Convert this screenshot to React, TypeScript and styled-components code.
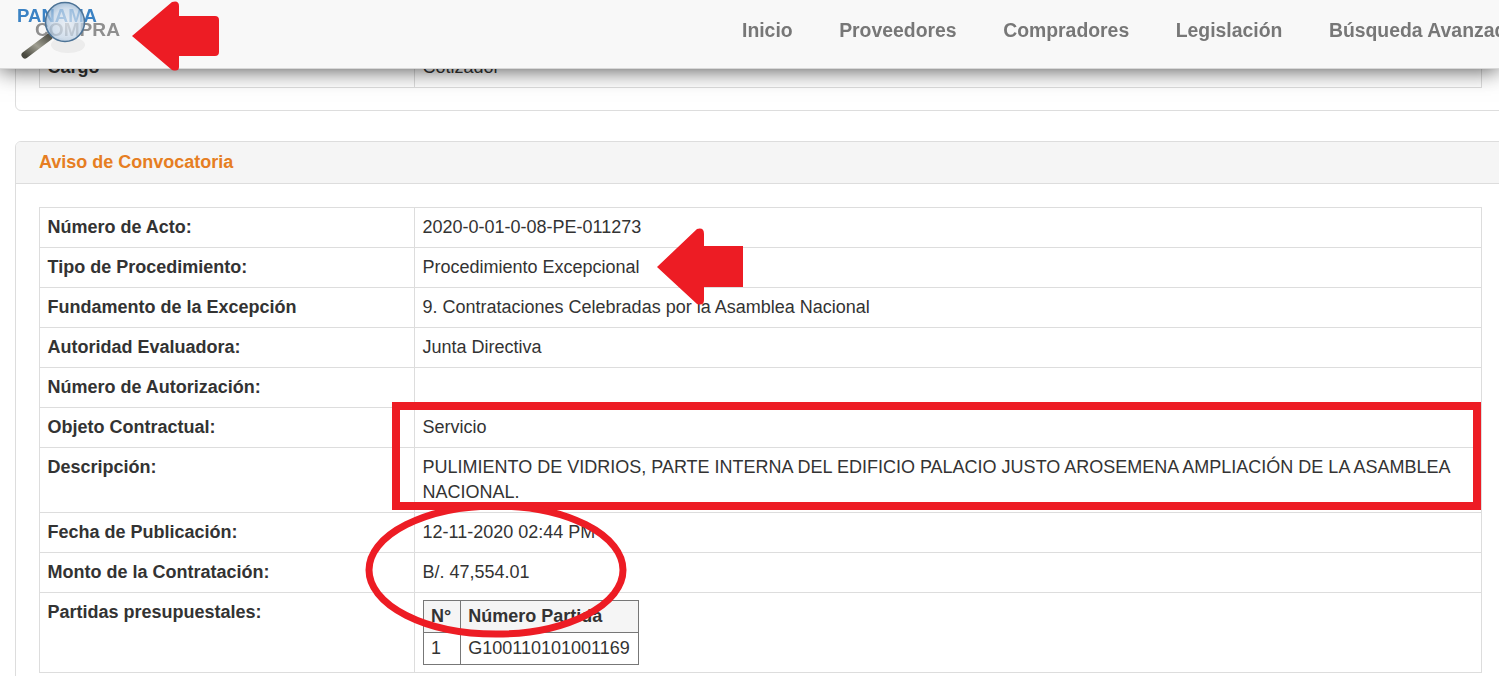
import React from "react";
import styled, { createGlobalStyle } from "styled-components";

const GlobalStyle = createGlobalStyle`
  html, body {
    margin: 0;
    height: 676px;
    overflow: hidden;
    background-color: #ffffff;
    color: #333333;
    font-family: "Liberation Sans", Arial, sans-serif;
    font-size: 18px;
  }
`;

const Navbar = styled.div`
  position: fixed;
  top: 0;
  left: 0;
  right: 0;
  height: 69px;
  z-index: 2;
  display: flex;
  justify-content: space-between;
  background-color: #f8f8f8;
  border-bottom: 1px solid #d8d8d8;
  box-sizing: border-box;
  box-shadow: 0 0 22px rgba(0, 0, 0, 0.75);
  overflow: hidden;
`;

const LogoBox = styled.div`
  padding-left: 14px;
`;

const NavList = styled.nav`
  display: flex;
  flex-shrink: 0;
  gap: 46.5px;
  padding-top: 18px;
  width: 757px;
  white-space: nowrap;
`;

const NavItem = styled.a`
  font-size: 19.4px;
  line-height: 24px;
  font-weight: 700;
  color: #777777;
`;

const Main = styled.div`
  padding: 46px 0 0 15px;
  width: 1540px;
`;

const Panel = styled.div`
  border: 1px solid #dddddd;
  border-radius: 6px;
  margin-bottom: 30px;
  background-color: #ffffff;
`;

const PanelHeading = styled.div`
  height: 42px;
  padding: 9px 23px 0;
  box-sizing: border-box;
  background-color: #f5f5f5;
  border-bottom: 1px solid #dddddd;
  border-radius: 5px 5px 0 0;
  color: #e67e22;
  font-size: 18px;
  line-height: 22px;
  font-weight: 700;
`;

const PanelBody = styled.div<{ $top: number }>`
  padding: ${(p) => p.$top}px 0 22px 23px;
`;

const Table = styled.table`
  width: 1443px;
  border-collapse: collapse;
  table-layout: fixed;
`;

const LabelCell = styled.td`
  width: 375px;
  box-sizing: border-box;
  border: 1px solid #dddddd;
  padding: 7px 8px 7px 7.5px;
  font-weight: 700;
  line-height: 25px;
  vertical-align: top;
  color: #333333;
`;

const ValueCell = styled.td`
  border: 1px solid #dddddd;
  padding: 7px 8px 7px 7.5px;
  line-height: 25px;
  vertical-align: top;
  color: #333333;
`;

const BudgetTable = styled.table`
  border-collapse: collapse;
  border: 1px solid #222222;
`;

const BudgetHead = styled.th`
  border: 1px solid #777777;
  padding: 3px 8.5px 3px 7.5px;
  background-color: #f5f5f5;
  text-align: left;
  font-weight: 700;
  line-height: 25px;
`;

const BudgetCell = styled.td`
  border: 1px solid #777777;
  padding: 3px 8.5px 3px 7.5px;
  line-height: 25px;
`;

const Annotations = styled.svg`
  position: absolute;
  top: 0;
  left: 0;
  z-index: 3;
  pointer-events: none;
`;

const rows: [string, string][] = [
  ["Número de Acto:", "2020-0-01-0-08-PE-011273"],
  ["Tipo de Procedimiento:", "Procedimiento Excepcional"],
  ["Fundamento de la Excepción", "9. Contrataciones Celebradas por la Asamblea Nacional"],
  ["Autoridad Evaluadora:", "Junta Directiva"],
  ["Número de Autorización:", ""],
  ["Objeto Contractual:", "Servicio"],
  [
    "Descripción:",
    "PULIMIENTO DE VIDRIOS, PARTE INTERNA DEL EDIFICIO PALACIO JUSTO AROSEMENA AMPLIACIÓN DE LA ASAMBLEA NACIONAL.",
  ],
  ["Fecha de Publicación:", "12-11-2020 02:44 PM"],
  ["Monto de la Contratación:", "B/. 47,554.01"],
];

const Logo = () => (
  <svg width="112" height="64" viewBox="0 0 112 64">
    <defs>
      <radialGradient id="lens" cx="0.55" cy="0.55" r="0.55">
        <stop offset="0" stopColor="#e4ebf3" />
        <stop offset="0.7" stopColor="#c3d5e8" />
        <stop offset="1" stopColor="#8fb0d0" />
      </radialGradient>
      <linearGradient id="handle" x1="0" y1="1" x2="1" y2="0">
        <stop offset="0" stopColor="#4a4a40" />
        <stop offset="0.5" stopColor="#a09f92" />
        <stop offset="1" stopColor="#55554c" />
      </linearGradient>
      <filter id="soft">
        <feGaussianBlur stdDeviation="0.7" />
      </filter>
    </defs>
    <g filter="url(#soft)">
      <text x="3" y="22" fontFamily="Liberation Sans" fontSize="19" fontWeight="700" fill="#3a82c4" textLength="80" lengthAdjust="spacingAndGlyphs">
        PANAMA
      </text>
      <text x="21" y="36" fontFamily="Liberation Sans" fontSize="19" fontWeight="700" fill="#8f8f8f" textLength="85" lengthAdjust="spacingAndGlyphs">
        COMPRA
      </text>
      <ellipse cx="54" cy="45" rx="17" ry="8" fill="#ececec" />
      <path d="M11 55 L35 37" stroke="url(#handle)" strokeWidth="7" strokeLinecap="round" />
      <circle cx="51" cy="22" r="19.5" fill="url(#lens)" fillOpacity="0.72" stroke="#4d7396" strokeWidth="1.6" />
    </g>
  </svg>
);

// arrows, box and circle drawn over the screenshot by hand
const Markup = () => (
  <Annotations width="1499" height="676" viewBox="0 0 1499 676">
    <path
      d="M132 36 L172 2 Q179 0 179 6 L179 16 L215 16 Q219 16 219 20 L219 52 Q219 56 215 56 L179 56 L179 67 Q179 72 172 70 Z"
      fill="#ed1c24"
    />
    <path
      d="M657 267 L697 229 Q704 227 704 234 L704 246 L743 246 L743 287 L704 287 L704 300 Q704 306 697 304 Z"
      fill="#ed1c24"
    />
    <rect x="396" y="406" width="1081" height="100" fill="none" stroke="#ed1c24" strokeWidth="8" />
    <ellipse cx="496" cy="570" rx="127" ry="64" fill="none" stroke="#ed1c24" strokeWidth="7" />
  </Annotations>
);

export default function App() {
  return (
    <>
      <GlobalStyle />
      <Navbar>
        <LogoBox>
          <Logo />
        </LogoBox>
        <NavList>
          <NavItem>Inicio</NavItem>
          <NavItem>Proveedores</NavItem>
          <NavItem>Compradores</NavItem>
          <NavItem>Legislación</NavItem>
          <NavItem>Búsqueda Avanzada</NavItem>
        </NavList>
      </Navbar>
      <Main>
        <Panel>
          <PanelBody $top={0}>
            <Table>
              <tbody>
                <tr>
                  <LabelCell>Cargo</LabelCell>
                  <ValueCell>Cotizador</ValueCell>
                </tr>
              </tbody>
            </Table>
          </PanelBody>
        </Panel>
        <Panel>
          <PanelHeading>Aviso de Convocatoria</PanelHeading>
          <PanelBody $top={23}>
            <Table>
              <tbody>
                {rows.map(([label, value]) => (
                  <tr key={label}>
                    <LabelCell>{label}</LabelCell>
                    <ValueCell>{value}</ValueCell>
                  </tr>
                ))}
                <tr>
                  <LabelCell>Partidas presupuestales:</LabelCell>
                  <ValueCell>
                    <BudgetTable>
                      <thead>
                        <tr>
                          <BudgetHead>N°</BudgetHead>
                          <BudgetHead>Número Partida</BudgetHead>
                        </tr>
                      </thead>
                      <tbody>
                        <tr>
                          <BudgetCell>1</BudgetCell>
                          <BudgetCell>G100110101001169</BudgetCell>
                        </tr>
                      </tbody>
                    </BudgetTable>
                  </ValueCell>
                </tr>
              </tbody>
            </Table>
          </PanelBody>
        </Panel>
      </Main>
      <Markup />
    </>
  );
}
